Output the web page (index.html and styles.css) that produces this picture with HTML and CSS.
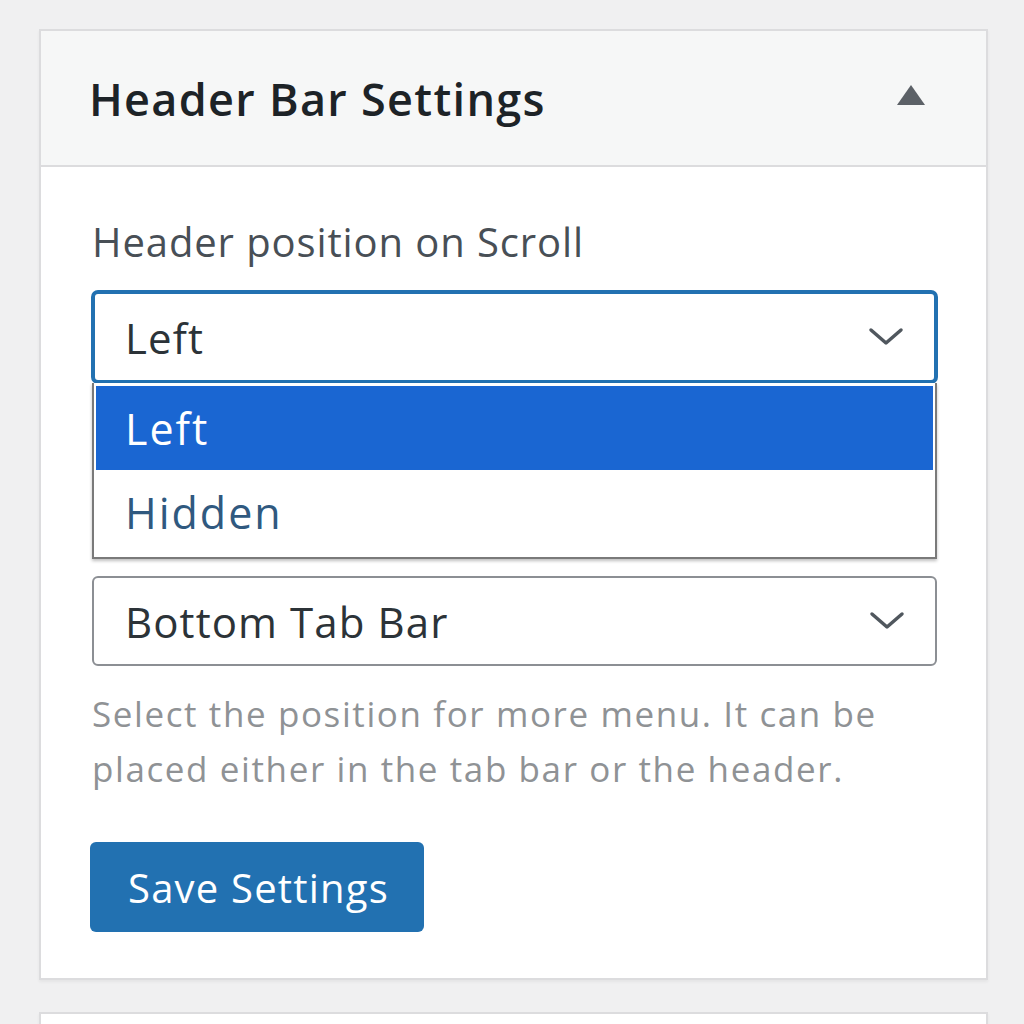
FILE: index.html
```html
<!DOCTYPE html>
<html lang="en">
<head>
<meta charset="utf-8">
<title>Header Bar Settings</title>
<link rel="stylesheet" href="styles.css">
</head>
<body>
<div class="page">
  <div class="postbox">
    <div class="postbox-header">
      <h2 class="postbox-title">Header Bar Settings</h2>
      <span class="toggle-arrow" aria-hidden="true"></span>
    </div>
    <div class="inside">
      <div class="field field-open">
        <label class="field-label">Header position on Scroll</label>
        <div class="select select-focus">
          <span class="select-value">Left</span>
          <svg class="chevron" viewBox="0 0 36 22" width="36" height="22"><polyline points="3,4 18,17 33,4" fill="none" stroke="#50575e" stroke-width="3.5" stroke-linecap="round" stroke-linejoin="round"/></svg>
        </div>
        <ul class="dropdown">
          <li class="option option-selected">Left</li>
          <li class="option">Hidden</li>
        </ul>
      </div>
      <div class="field field-second">
        <div class="select">
          <span class="select-value">Bottom Tab Bar</span>
          <svg class="chevron" viewBox="0 0 36 22" width="36" height="22"><polyline points="3,4 18,17 33,4" fill="none" stroke="#50575e" stroke-width="3.5" stroke-linecap="round" stroke-linejoin="round"/></svg>
        </div>
        <p class="description">Select the position for more menu. It can be placed either in the tab bar or the header.</p>
      </div>
      <button class="button-primary" type="button">Save Settings</button>
    </div>
  </div>
  <div class="postbox postbox-next"></div>
</div>
</body>
</html>
```

FILE: styles.css
```css
html, body {
  margin: 0;
  padding: 0;
  background: #f0f0f1;
}
body {
  font-family: "Open Sans", "Noto Sans", "Liberation Sans", sans-serif;
  color: #2c3338;
  height: 1024px;
  overflow: hidden;
}
.page {
  padding: 29px 0 0 39px;
  width: 949px;
}
.postbox {
  background: #fff;
  border: 2px solid #dcdcde;
  box-shadow: 0 2px 3px rgba(0, 0, 0, 0.05);
}
.postbox-next {
  margin-top: 32px;
  height: 60px;
}
.postbox-header {
  height: 134px;
  background: #f6f7f7;
  border-bottom: 2px solid #dcdcde;
  display: flex;
  align-items: center;
  justify-content: space-between;
  padding: 0 61px 0 48px;
}
.postbox-title {
  margin: 0;
  font-size: 45px;
  font-weight: 600;
  color: #1d2327;
  letter-spacing: 1.3px;
}
.toggle-arrow {
  width: 0;
  height: 0;
  border-left: 14px solid transparent;
  border-right: 14px solid transparent;
  border-bottom: 20px solid #5c6167;
  margin-top: -6px;
}
.inside {
  padding: 51px 49px 46px 51px;
}
.field {
  position: relative;
}
.field-second {
  margin-top: 193px;
}
.field-label {
  display: block;
  font-size: 40px;
  line-height: 48px;
  letter-spacing: 0.9px;
  color: #484f56;
  margin-bottom: 25px;
}
.select {
  height: 92px;
  box-sizing: border-box;
  border: 2px solid #8c8f94;
  border-radius: 6px;
  background: #fff;
  display: flex;
  align-items: center;
  justify-content: space-between;
  padding: 0 30px 0 31px;
}
.field-second .select {
  height: 90px;
}
.select-focus {
  border: 3px solid #2271b1;
  box-shadow: 0 0 0 1px #2271b1;
  padding-left: 30px;
}
.select-value {
  font-size: 42px;
  letter-spacing: 1.1px;
  color: #2c3338;
}
.chevron {
  display: block;
}
.dropdown {
  position: absolute;
  left: 0;
  right: 0;
  top: 165px;
  margin: 0;
  padding: 3px 2px 3px 2px;
  list-style: none;
  background: #fff;
  border: 2px solid #7a7a7a;
  border-top: none;
  box-shadow: 0 2px 3px rgba(0, 0, 0, 0.25);
  z-index: 2;
}
.option {
  height: 84px;
  display: flex;
  align-items: center;
  padding-left: 29px;
  font-size: 43px;
  letter-spacing: 2px;
  color: #30597f;
}
.option-selected {
  background: #1a66d2;
  color: #fff;
}
.description {
  margin: 20px 0 0 0;
  font-size: 35px;
  line-height: 55px;
  letter-spacing: 1.6px;
  color: #8f9295;
}
.button-primary {
  display: block;
  margin-top: 46px;
  margin-left: -2px;
  height: 90px;
  width: 334px;
  border: none;
  border-radius: 6px;
  background: #2271b1;
  color: #fff;
  font-family: "Open Sans", "Noto Sans", "Liberation Sans", sans-serif;
  font-size: 40px;
  letter-spacing: 1.2px;
  text-align: left;
  padding: 0 0 0 38px;
}
```
